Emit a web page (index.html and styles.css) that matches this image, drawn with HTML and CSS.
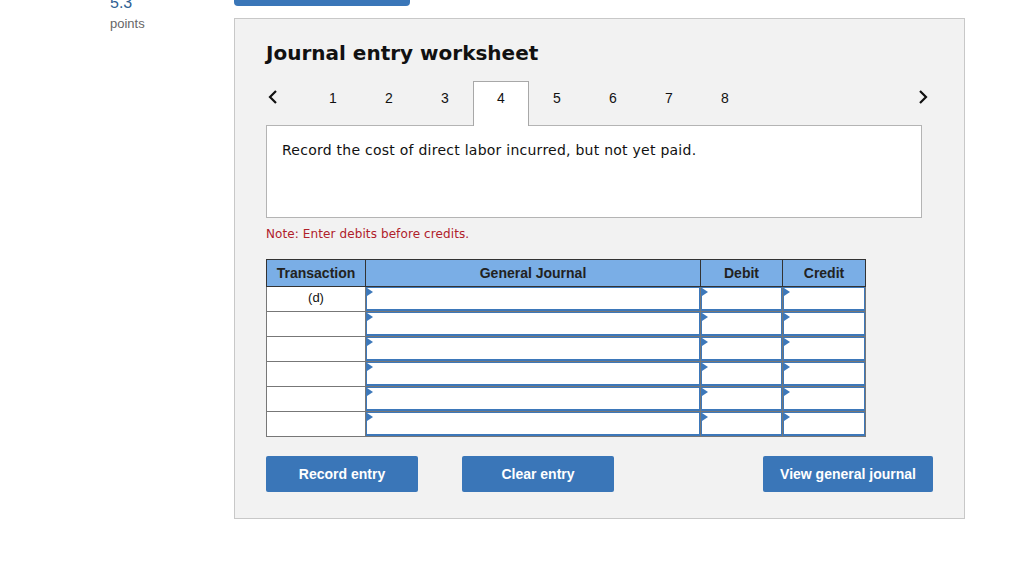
FILE: index.html
```html
<!DOCTYPE html>
<html>
<head>
    <meta charset="utf-8" />
    <title>Journal entry worksheet</title>
    <link rel="stylesheet" href="styles.css">
</head>
<body>
    <div class="page">
        <div class="side">
            <div class="score">5.3</div>
            <div class="points">points</div>
        </div>
        <div class="main">
            <div class="topbar"></div>
            <div class="panel">
                <h1>Journal entry worksheet</h1>
                <div class="tabs">
                    <span class="arrow">
                        <svg width="10" height="16" viewBox="0 0 10 16"><path d="M8 2 L2 8 L8 14" fill="none" stroke="#111" stroke-width="2.2"/></svg>
                    </span>
                    <span class="tab">1</span>
                    <span class="tab">2</span>
                    <span class="tab">3</span>
                    <span class="tab active">4</span>
                    <span class="tab">5</span>
                    <span class="tab">6</span>
                    <span class="tab">7</span>
                    <span class="tab">8</span>
                    <span class="arrow right">
                        <svg width="10" height="16" viewBox="0 0 10 16"><path d="M2 2 L8 8 L2 14" fill="none" stroke="#111" stroke-width="2.2"/></svg>
                    </span>
                </div>
                <div class="question">Record the cost of direct labor incurred, but not yet paid.</div>
                <p class="note">Note: Enter debits before credits.</p>

                <table class="journal">
                    <tr>
                        <th class="c-trans">Transaction</th>
                        <th class="c-gen">General Journal</th>
                        <th class="c-debit">Debit</th>
                        <th class="c-credit">Credit</th>
                    </tr>
                    <tr>
                        <td class="trans">(d)</td>
                        <td><div class="field"></div></td>
                        <td><div class="field"></div></td>
                        <td><div class="field"></div></td>
                    </tr>
                    <tr>
                        <td class="trans"></td>
                        <td><div class="field"></div></td>
                        <td><div class="field"></div></td>
                        <td><div class="field"></div></td>
                    </tr>
                    <tr>
                        <td class="trans"></td>
                        <td><div class="field"></div></td>
                        <td><div class="field"></div></td>
                        <td><div class="field"></div></td>
                    </tr>
                    <tr>
                        <td class="trans"></td>
                        <td><div class="field"></div></td>
                        <td><div class="field"></div></td>
                        <td><div class="field"></div></td>
                    </tr>
                    <tr>
                        <td class="trans"></td>
                        <td><div class="field"></div></td>
                        <td><div class="field"></div></td>
                        <td><div class="field"></div></td>
                    </tr>
                    <tr>
                        <td class="trans"></td>
                        <td><div class="field"></div></td>
                        <td><div class="field"></div></td>
                        <td><div class="field"></div></td>
                    </tr>
                </table>

                <div class="actions">
                    <button class="btn">Record entry</button>
                    <button class="btn">Clear entry</button>
                    <button class="btn wide">View general journal</button>
                </div>
            </div>
        </div>
    </div>
</body>
</html>
```

FILE: styles.css
```css
body {
    margin: 0;
    padding: 0;
    background-color: white;
    font-family: "DejaVu Sans", Verdana, sans-serif;
    color: #111;
}

.page {
    display: flex;
    padding-left: 110px;
}

.side {
    width: 124px;
}

.score {
    font-family: "Liberation Sans", Arial, sans-serif;
    font-size: 16px;
    color: #2f5f93;
    line-height: 16px;
    margin-top: -5px;
}

.points {
    font-family: "Liberation Sans", Arial, sans-serif;
    font-size: 13px;
    color: #666;
    margin-top: 5px;
}

.main {
    width: 731px;
}

.topbar {
    width: 176px;
    height: 6px;
    background-color: #3a76b8;
    border-radius: 0 0 4px 4px;
}

.panel {
    margin-top: 12px;
    background-color: #f2f2f2;
    border: 1px solid #c8c8c8;
    height: 499px;
    padding: 0 31px 0 31px;
}

h1 {
    font-size: 20px;
    font-weight: bold;
    margin: 20px 0 0 0;
    line-height: 28px;
}

.tabs {
    display: flex;
    align-items: flex-end;
    width: 656px;
    margin-top: 14px;
    height: 44px;
    position: relative;
    z-index: 1;
}

.arrow {
    width: 39px;
    height: 36px;
    padding-left: 2px;
    box-sizing: border-box;
}

.arrow.right {
    margin-left: auto;
    width: 10px;
    padding-left: 0;
    margin-right: -6px;
}

.tab {
    width: 56px;
    height: 44px;
    box-sizing: border-box;
    font-family: "Liberation Sans", Arial, sans-serif;
    font-size: 14px;
    text-align: center;
    line-height: 34px;
}

.tab.active {
    background-color: white;
    border: 1px solid #a8a8a8;
    border-bottom: none;
    height: 45px;
    margin-bottom: -1px;
    line-height: 32px;
}

.question {
    width: 656px;
    height: 93px;
    box-sizing: border-box;
    background-color: white;
    border: 1px solid #b4b4b4;
    font-size: 14px;
    letter-spacing: 0.25px;
    padding: 15px 15px;
    line-height: 18px;
}

.note {
    color: #b0202a;
    font-size: 12px;
    letter-spacing: 0.1px;
    margin: 7px 0 0 0;
    line-height: 18px;
}

.journal {
    border-collapse: collapse;
    margin-top: 16px;
    font-family: "Liberation Sans", Arial, sans-serif;
}

.journal th {
    background-color: #7aaee6;
    border: 1px solid #333;
    font-size: 14px;
    font-weight: bold;
    color: #222;
    height: 26px;
    padding: 0;
}

.c-trans {
    width: 98px;
}

.c-gen {
    width: 334px;
}

.c-debit {
    width: 81px;
}

.c-credit {
    width: 82px;
}

.journal td {
    border: 1px solid #777;
    background-color: white;
    height: 24px;
    padding: 0;
}

.journal td.trans {
    text-align: center;
    font-size: 13px;
    vertical-align: top;
    padding-top: 3px;
    height: 21px;
}

.field {
    position: relative;
    height: 21px;
    border: 1px solid #3d78ba;
    border-bottom-width: 2px;
    background-color: white;
}

.field::before {
    content: "";
    position: absolute;
    left: 0;
    top: 0;
    border-left: 6px solid #3d78ba;
    border-top: 4px solid transparent;
    border-bottom: 4px solid transparent;
}

.actions {
    display: flex;
    gap: 44px;
    margin-top: 19px;
}

.btn {
    width: 152px;
    height: 36px;
    background-color: #3a76b8;
    color: white;
    border: none;
    border-radius: 2px;
    font-family: "Liberation Sans", Arial, sans-serif;
    font-size: 14px;
    font-weight: bold;
}

.btn.wide {
    width: 170px;
    margin-left: auto;
}
```
